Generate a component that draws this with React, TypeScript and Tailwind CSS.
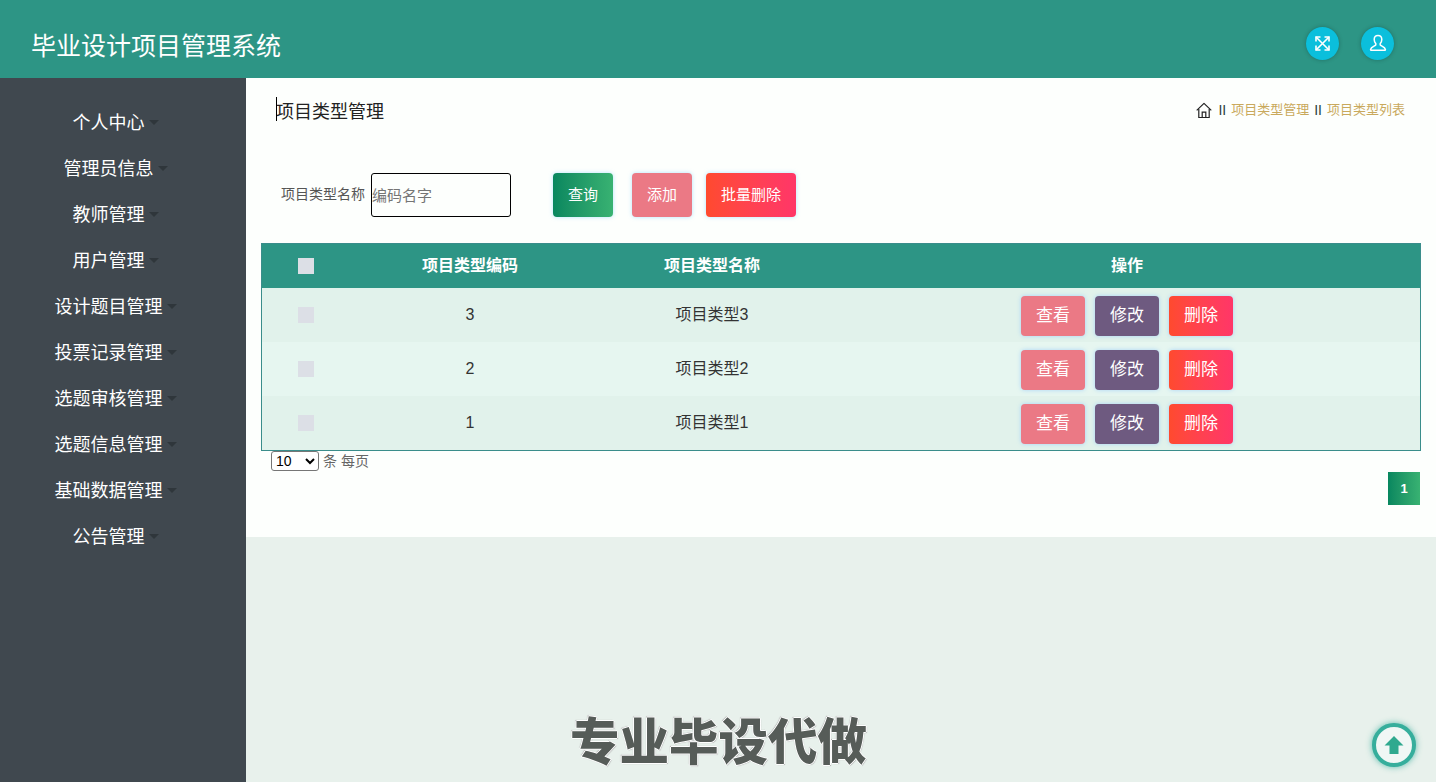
import React from "react";

const menu = ["个人中心", "管理员信息", "教师管理", "用户管理", "设计题目管理", "投票记录管理", "选题审核管理", "选题信息管理", "基础数据管理", "公告管理"];
const rows = [
  { code: "3", name: "项目类型3", bg: "bg-[#e1f2eb]" },
  { code: "2", name: "项目类型2", bg: "bg-[#e6f6f0]" },
  { code: "1", name: "项目类型1", bg: "bg-[#e1f2eb]" },
];

function Box() {
  return <span className="block w-4 h-4 mx-auto bg-[#dcdfe6]" />;
}

export default function App() {
  return (
    <div className="relative h-screen overflow-hidden flex flex-col bg-[#e8f1ec] font-['Liberation_Sans','Noto_Sans_CJK_SC',sans-serif]">
      <header className="h-[78px] shrink-0 bg-[#2d9585] flex items-center justify-between pl-[31px] pr-[42px]">
        <h1 className="text-[25px] font-normal text-white mt-[16px]">毕业设计项目管理系统</h1>
        <div className="flex gap-[22px] mt-[8px]">
          <span className="w-[33px] h-[33px] rounded-full bg-[#0bbfdc] shadow-[0_0_4px_rgba(0,0,0,0.25)] flex items-center justify-center">
            <svg width="17" height="17" viewBox="0 0 17 17" fill="none" stroke="white" strokeWidth="1.6">
              <path d="M2 2 15 15M15 2 2 15" />
              <path d="M2 6.5V2H6.5M10.5 2H15V6.5M15 10.5V15H10.5M6.5 15H2V10.5" />
            </svg>
          </span>
          <span className="w-[33px] h-[33px] rounded-full bg-[#0bbfdc] shadow-[0_0_4px_rgba(0,0,0,0.25)] flex items-center justify-center">
            <svg width="18" height="18" viewBox="0 0 18 18" fill="none" stroke="white" strokeWidth="1.5" strokeLinejoin="round">
              <path d="M9 1.5c-2.4 0-3.8 1.8-3.8 4 0 1.8.7 3.2 1.6 4.1v1.3c-.6 1.1-4.8 2-5.2 4.4-.1.6.2 1 .8 1h13.2c.6 0 .9-.4.8-1-.4-2.4-4.6-3.3-5.2-4.4V9.6c.9-.9 1.6-2.3 1.6-4.1 0-2.2-1.4-4-3.8-4z" />
            </svg>
          </span>
        </div>
      </header>

      <div className="flex-1 flex min-h-0">
        <aside className="w-[246px] shrink-0 bg-[#40484f] pt-[22px] pr-[15px]">
          {menu.map((m) => (
            <div key={m} className="h-[46px] flex items-center justify-center text-[18px] text-white">
              <span>{m}</span>
              <span className="ml-1 -mt-[2px] w-0 h-0 border-x-[5px] border-x-transparent border-t-[5px] border-t-[#2f363b]" />
            </div>
          ))}
        </aside>

        <main className="flex-1 min-w-0">
          <section className="h-[459px] bg-[#fdfffd] pt-[21px] px-[15px]">
            <div className="h-6 flex items-center justify-between pl-[15px] pr-[16px]">
              <div className="relative text-[18px] text-[#222] pt-[2px]">
                项目类型管理
                <span className="absolute left-0 top-0 w-px h-[24px] bg-black" />
              </div>
              <div className="flex items-center text-[13px] text-[#c9a95c] mt-[-2px]">
                <svg width="16" height="17" viewBox="0 0 16 17" fill="none" stroke="#222" strokeWidth="1.2" className="mr-[6px]">
                  <path d="M.7 8.4 8 1.4l7.3 7" strokeLinejoin="round" />
                  <path d="M2.8 7v8.5h10.4V7" />
                  <path d="M6.2 15.5V10.2h3.6v5.3" />
                </svg>
                <span className="text-[14px] text-[#2a3f3f] mr-[5px]">II</span>
                <span>项目类型管理</span>
                <span className="text-[14px] text-[#2a3f3f] mx-[5px]">II</span>
                <span>项目类型列表</span>
              </div>
            </div>

            <div className="mt-[50px] h-11 flex items-center">
              <span className="ml-[20px] w-[90px] text-[14px] text-[#555] -mt-[2px] whitespace-nowrap">项目类型名称</span>
              <input
                placeholder="编码名字"
                className="w-[140px] h-11 border border-black rounded-[3px] bg-transparent text-[15px] placeholder:text-[#757575] outline-none"
              />
              <button className="ml-[42px] w-[60px] h-11 rounded text-[15px] text-white bg-gradient-to-r from-[#07875f] to-[#38b272] shadow-[0_0_4px_rgba(130,210,255,0.6)]">查询</button>
              <button className="ml-[19px] w-[60px] h-11 rounded text-[15px] text-white bg-[#eb7985] shadow-[0_0_4px_rgba(130,210,255,0.6)]">添加</button>
              <button className="ml-[14px] w-[90px] h-11 rounded text-[15px] text-white bg-gradient-to-r from-[#ff4a2e] to-[#ff3668] shadow-[0_0_4px_rgba(130,210,255,0.6)]">批量删除</button>
            </div>

            <table className="mt-[26px] w-[1160px] table-fixed border border-[#3a8d8b] border-separate border-spacing-0">
              <colgroup>
                <col className="w-[88px]" />
                <col className="w-[240px]" />
                <col className="w-[244px]" />
                <col />
              </colgroup>
              <thead>
                <tr className="h-[44px] bg-[#2d9585] text-white text-[16px] font-bold">
                  <th><Box /></th>
                  <th>项目类型编码</th>
                  <th>项目类型名称</th>
                  <th>操作</th>
                </tr>
              </thead>
              <tbody>
                {rows.map((r) => (
                  <tr key={r.code} className={`h-[54px] text-[16px] text-[#333] ${r.bg}`}>
                    <td><Box /></td>
                    <td className="text-center">{r.code}</td>
                    <td className="text-center">{r.name}</td>
                    <td>
                      <div className="flex justify-center gap-[10px] pt-[2px] text-[17px] text-white">
                        <button className="w-16 h-10 rounded bg-[#eb7985] shadow-[0_0_4px_rgba(130,190,255,0.6)]">查看</button>
                        <button className="w-16 h-10 rounded bg-[#6e5a80] shadow-[0_0_4px_rgba(130,190,255,0.6)]">修改</button>
                        <button className="w-16 h-10 rounded bg-gradient-to-r from-[#ff4a2e] to-[#ff3668] shadow-[0_0_4px_rgba(130,190,255,0.6)]">删除</button>
                      </div>
                    </td>
                  </tr>
                ))}
              </tbody>
            </table>

            <div className="h-5 pl-[10px] flex items-center text-[14px] text-[#666]">
              <select className="w-12 h-5 border border-[#767676] rounded-[3px] bg-white text-[14px] text-black appearance-auto">
                <option>10</option>
              </select>
              <span className="ml-1">条 每页</span>
            </div>
            <div className="mt-px w-[1159px] flex justify-end">
              <span className="w-8 h-[33px] flex items-center justify-center text-[13px] font-bold text-white bg-gradient-to-r from-[#07875f] to-[#38b272]">1</span>
            </div>
          </section>
        </main>
      </div>

      <div className="absolute left-[570px] top-[708px] text-[49.5px] leading-[70px] font-black text-[#565c58] [text-shadow:1px_0_0_#fff,-1px_0_0_#fff,0_1px_0_#fff,0_-1px_0_#fff,1px_1px_1px_#aaa,-1px_-1px_1px_#aaa] whitespace-nowrap">
        专业毕设代做
      </div>

      <div className="absolute left-[1372px] top-[723px] w-11 h-11 rounded-full border-4 border-[#36ae9c] bg-[#f0f7f5] shadow-[0_0_6px_rgba(54,174,156,0.8)] flex items-center justify-center">
        <svg width="22" height="22" viewBox="0 0 22 22">
          <path d="M11 2 20.5 11.5H15.5V20H6.5V11.5H1.5Z" fill="#2fa98f" />
        </svg>
      </div>
    </div>
  );
}
